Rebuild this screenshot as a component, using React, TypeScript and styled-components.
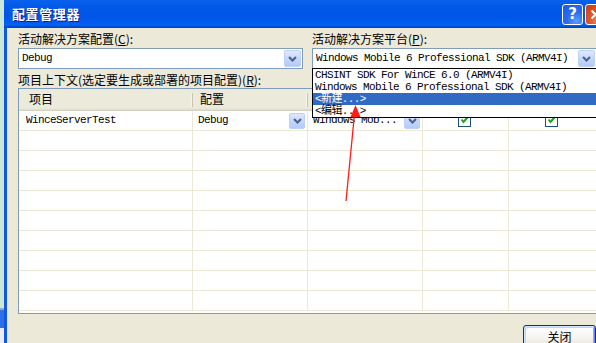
import React from "react";
import styled, { createGlobalStyle } from "styled-components";

const cjk = `"Noto Sans CJK SC", "Noto Sans", sans-serif`;
const mono = `"Liberation Mono", "Noto Sans CJK SC", monospace`;
const COLS = "174px 115px 115px 86px 87px";

const GlobalStyle = createGlobalStyle`
  html, body { margin: 0; padding: 0; background: #cbe8d4; }
  body { font-family: ${cjk}; }
  * { box-sizing: border-box; }
`;

const Page = styled.div`
  position: relative;
  width: 596px;
  height: 343px;
  overflow: hidden;
  display: flex;
`;

const Backdrop = styled.div`
  flex: none;
  width: 4px;
  background: linear-gradient(
    to bottom,
    #cbe8d4 0 308px,
    #9aa6b8 308px 310px,
    #2f6fe6 310px 328px,
    #ececf2 328px
  );
`;

const Window = styled.div`
  flex: none;
  width: 608px;
  height: 100%;
  display: flex;
  flex-direction: column;
  border-left: 3px solid #0d58e6;
  background: #ece9d8;
`;

const TitleBar = styled.div`
  flex: none;
  height: 28px;
  display: flex;
  align-items: center;
  padding: 0 6px 0 8px;
  margin-left: -3px;
  background: linear-gradient(
    to bottom,
    #0a62ec 0%,
    #0059e8 25%,
    #0055e4 55%,
    #005bef 78%,
    #0062f6 88%,
    #004fd2 95%,
    #003fb0 100%
  );
`;

const Title = styled.span`
  color: #fff;
  font: bold 13px/16px ${cjk};
  letter-spacing: 0.6px;
  text-shadow: 1px 1px 0 #0a1f86;
`;

const CaptionButtons = styled.div`
  margin-left: auto;
  display: flex;
  gap: 2px;
`;

const CaptionButton = styled.div<{ $kind: "help" | "close" }>`
  width: 21px;
  height: 21px;
  border: 1px solid #fff;
  border-radius: 3px;
  display: flex;
  align-items: center;
  justify-content: center;
  color: #fff;
  font: bold 15px/1 "DejaVu Sans", sans-serif;
  background: ${(p) =>
    p.$kind === "help"
      ? "radial-gradient(circle at 70% 85%, #5a9cff 0%, #2a6cf0 45%, #1d5be0 100%)"
      : "radial-gradient(circle at 70% 85%, #f08a63 0%, #e0582c 45%, #c83d12 100%)"};
`;

const Body = styled.div`
  flex: 1;
  display: flex;
  flex-direction: column;
  padding: 4px 11px 0 11px;
`;

const TopGrid = styled.div`
  display: grid;
  grid-template-columns: 285px 285px;
  column-gap: 9px;
`;

const Field = styled.div`
  display: flex;
  flex-direction: column;
  gap: 2px;
`;

const Label = styled.div`
  height: 14px;
  font: 12px/14px ${cjk};
  color: #000;
  white-space: nowrap;
  u {
    text-decoration: underline;
  }
`;

const Combo = styled.div`
  position: relative;
  height: 21px;
  border: 1px solid #7f9db9;
  background: #fff;
  display: flex;
  align-items: center;
  padding: 0 1px 0 3px;
`;

const MonoText = styled.span`
  flex: 1;
  font: 11px/13px ${mono};
  letter-spacing: -0.6px;
  color: #000;
  white-space: nowrap;
  overflow: hidden;
`;

const DropBtn = styled.span<{ $w: number; $h: number }>`
  flex: none;
  width: ${(p) => p.$w}px;
  height: ${(p) => p.$h}px;
  display: flex;
  align-items: center;
  justify-content: center;
  border: 1px solid #bcd0f8;
  border-radius: 2px;
  background: linear-gradient(to bottom, #dfe9fe 0%, #c6d8fc 45%, #b5caf7 100%);
`;

const Popup = styled.ul`
  position: absolute;
  top: 19px;
  left: -1px;
  right: -1px;
  margin: 0;
  padding: 0;
  list-style: none;
  border: 1px solid #000;
  background: #fff;
  z-index: 2;
`;

const PopupItem = styled.li<{ $selected?: boolean }>`
  height: 12px;
  padding-left: 2px;
  font: 11px/12px ${mono};
  letter-spacing: -0.6px;
  white-space: nowrap;
  color: ${(p) => (p.$selected ? "#fff" : "#000")};
  background: ${(p) => (p.$selected ? "#316ac5" : "transparent")};
`;

const ContextLabel = styled(Label)`
  margin-top: 4px;
`;

const Table = styled.div`
  margin-top: 1px;
  width: 579px;
  height: 226px;
  border: 1px solid #7f9db9;
  background: #fff;
  display: flex;
  flex-direction: column;
`;

const HeaderRow = styled.div`
  display: grid;
  grid-template-columns: ${COLS};
  height: 22px;
  background: #ebeadb;
  box-shadow: inset 0 -1px 0 #d6d2c2, inset 0 -2px 0 #e2dfcd, inset 0 -3px 0 #e8e6d6;
`;

const HeaderCell = styled.div<{ $pad: number }>`
  position: relative;
  padding-left: ${(p) => p.$pad}px;
  font: 12px/20px ${cjk};
  color: #000;
  white-space: nowrap;
  overflow: hidden;
  &::after {
    content: "";
    position: absolute;
    right: 0;
    top: 4px;
    bottom: 4px;
    width: 1px;
    background: #c7c5b2;
    box-shadow: -1px 0 0 #f6f5ee;
  }
`;

const Row = styled.div`
  display: grid;
  grid-template-columns: ${COLS};
  height: 20px;
`;

const Cell = styled.div<{ $pad?: number; $center?: boolean }>`
  display: flex;
  align-items: center;
  justify-content: ${(p) => (p.$center ? "center" : "space-between")};
  padding: 0 2px 0 ${(p) => p.$pad ?? 0}px;
  border-right: 1px solid #ebe8d5;
  border-bottom: 1px solid #ebe8d5;
  &:last-child {
    border-right: none;
  }
`;

const CheckBox = styled.span`
  width: 13px;
  height: 13px;
  border: 1px solid #1c5180;
  background: #fff;
  display: flex;
  align-items: center;
  justify-content: center;
`;

const Footer = styled.div`
  display: flex;
  justify-content: flex-end;
  margin-top: 11px;
  padding-right: 5px;
`;

const Button = styled.button`
  width: 73px;
  height: 23px;
  border: 1px solid #003c74;
  border-radius: 3px;
  padding: 0;
  font: 12px/1 ${cjk};
  color: #000;
  background: linear-gradient(to bottom, #ffffff 0%, #f4f3ee 60%, #e3e0d2 100%);
  box-shadow: inset 1px 1px 0 #cee7ff, inset -1px -1px 0 #6982ee,
    inset 2px 2px 0 #bcd4f6, inset -2px -2px 0 #89adf4;
`;

const Annotation = styled.svg`
  position: absolute;
  left: 0;
  top: 0;
  pointer-events: none;
  z-index: 5;
`;

const Chevron = () => (
  <svg width="9" height="6" viewBox="0 0 9 6">
    <path d="M1 1 L4.5 4.5 L8 1" stroke="#4d6185" strokeWidth="2" fill="none" />
  </svg>
);

const Tick = () => (
  <svg width="9" height="9" viewBox="0 0 9 9">
    <path d="M1.5 3.5 L3.5 6 L7.5 1.5" stroke="#21a121" strokeWidth="2" fill="none" />
  </svg>
);

const CloseX = () => (
  <svg width="11" height="11" viewBox="0 0 11 11">
    <path d="M1.5 1.5 L9.5 9.5 M9.5 1.5 L1.5 9.5" stroke="#fff" strokeWidth="2" />
  </svg>
);

const platforms = [
  "CHSINT SDK For WinCE 6.0 (ARMV4I)",
  "Windows Mobile 6 Professional SDK (ARMV4I)",
  "<新建...>",
  "<编辑...>",
];

export default function App() {
  const emptyRows = Array.from({ length: 9 });
  return (
    <>
      <GlobalStyle />
      <Page>
        <Backdrop />
        <Window>
          <TitleBar>
            <Title>配置管理器</Title>
            <CaptionButtons>
              <CaptionButton $kind="help">?</CaptionButton>
              <CaptionButton $kind="close">
                <CloseX />
              </CaptionButton>
            </CaptionButtons>
          </TitleBar>
          <Body>
            <TopGrid>
              <Field>
                <Label>
                  活动解决方案配置(<u>C</u>):
                </Label>
                <Combo>
                  <MonoText>Debug</MonoText>
                  <DropBtn $w={17} $h={17}>
                    <Chevron />
                  </DropBtn>
                </Combo>
              </Field>
              <Field>
                <Label>
                  活动解决方案平台(<u>P</u>):
                </Label>
                <Combo>
                  <MonoText>Windows Mobile 6 Professional SDK (ARMV4I)</MonoText>
                  <DropBtn $w={17} $h={17}>
                    <Chevron />
                  </DropBtn>
                  <Popup>
                    {platforms.map((p, i) => (
                      <PopupItem key={p} $selected={i === 2}>
                        {p}
                      </PopupItem>
                    ))}
                  </Popup>
                </Combo>
              </Field>
            </TopGrid>
            <ContextLabel>
              项目上下文(选定要生成或部署的项目配置)(<u>R</u>):
            </ContextLabel>
            <Table>
              <HeaderRow>
                <HeaderCell $pad={10}>项目</HeaderCell>
                <HeaderCell $pad={7}>配置</HeaderCell>
                <HeaderCell $pad={7} />
                <HeaderCell $pad={7} />
                <HeaderCell $pad={7} />
              </HeaderRow>
              <Row>
                <Cell $pad={7}>
                  <MonoText>WinceServerTest</MonoText>
                </Cell>
                <Cell $pad={5}>
                  <MonoText>Debug</MonoText>
                  <DropBtn $w={16} $h={16}>
                    <Chevron />
                  </DropBtn>
                </Cell>
                <Cell $pad={5}>
                  <MonoText>Windows Mob...</MonoText>
                  <DropBtn $w={16} $h={16}>
                    <Chevron />
                  </DropBtn>
                </Cell>
                <Cell $center>
                  <CheckBox>
                    <Tick />
                  </CheckBox>
                </Cell>
                <Cell $center>
                  <CheckBox>
                    <Tick />
                  </CheckBox>
                </Cell>
              </Row>
              {emptyRows.map((_, i) => (
                <Row key={i}>
                  <Cell />
                  <Cell />
                  <Cell />
                  <Cell />
                  <Cell />
                </Row>
              ))}
            </Table>
            <Footer>
              <Button>关闭</Button>
            </Footer>
          </Body>
        </Window>
        <Annotation width="596" height="343" viewBox="0 0 596 343">
          <line x1="346" y1="201" x2="354.5" y2="114" stroke="#ff1a1a" strokeWidth="1.3" />
          <polygon points="355.5,105 350.5,117 360.5,117" fill="#ff1a1a" />
        </Annotation>
      </Page>
    </>
  );
}
